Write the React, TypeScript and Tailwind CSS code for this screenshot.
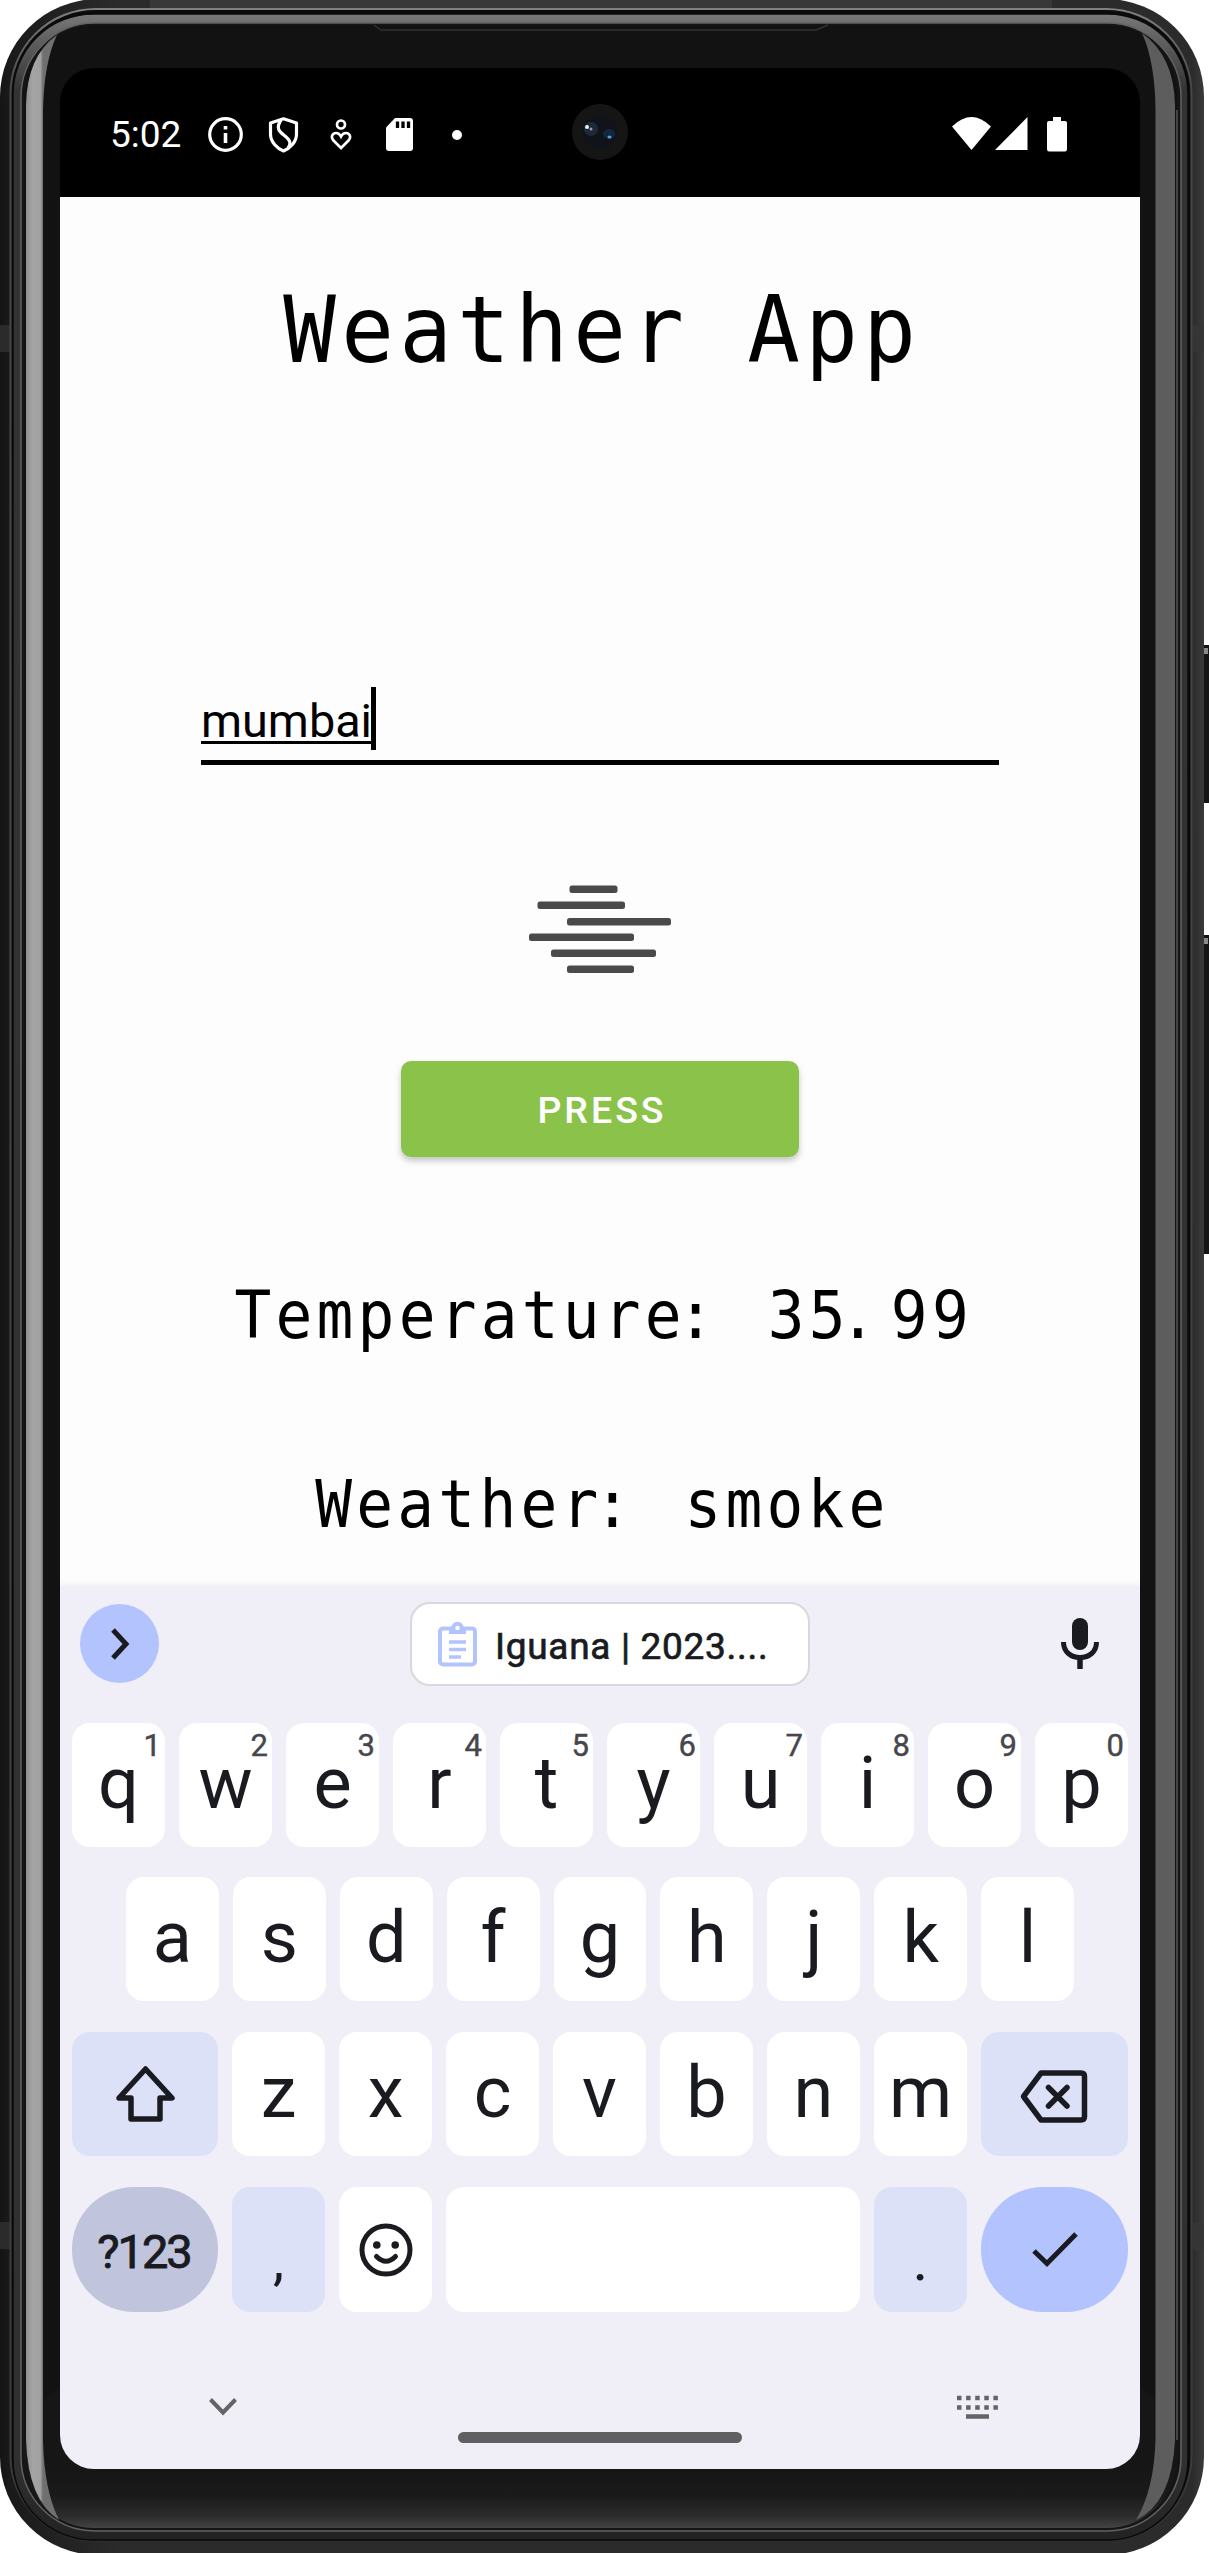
import React from "react";

const INK = "#1a1b21";

function PhoneBody() {
  return (
    <svg className="absolute inset-0" width="1209" height="2553" viewBox="0 0 1209 2553" aria-hidden="true">
      <defs>
        <linearGradient id="shell" x1="0" x2="1" y1="0" y2="0">
          <stop offset="0" stopColor="#141414" />
          <stop offset="0.008" stopColor="#1a1a1a" />
          <stop offset="0.1" stopColor="#2b2b2b" />
          <stop offset="0.99" stopColor="#2b2b2b" />
          <stop offset="1" stopColor="#3a3a3a" />
        </linearGradient>
        <linearGradient id="rim" x1="0" x2="0" y1="0" y2="1">
          <stop offset="0" stopColor="#808080" />
          <stop offset="0.03" stopColor="#484848" />
          <stop offset="0.97" stopColor="#3c3c3c" />
          <stop offset="1" stopColor="#2c2c2c" />
        </linearGradient>
        <linearGradient id="band" x1="0" x2="0" y1="0" y2="1">
          <stop offset="0" stopColor="#787878" />
          <stop offset="0.03" stopColor="#333333" />
          <stop offset="0.97" stopColor="#303030" />
          <stop offset="1" stopColor="#222222" />
        </linearGradient>
        <linearGradient id="face" x1="0" x2="0" y1="2469" y2="2528" gradientUnits="userSpaceOnUse">
          <stop offset="0" stopColor="#161616" />
          <stop offset="0.45" stopColor="#1a1a1a" />
          <stop offset="0.8" stopColor="#2c2c2c" />
          <stop offset="1" stopColor="#434343" />
        </linearGradient>
        <linearGradient id="leftGlass" x1="26" x2="43" y1="0" y2="0" gradientUnits="userSpaceOnUse">
          <stop offset="0" stopColor="#8f8f8f" />
          <stop offset="0.4" stopColor="#a5a5a5" />
          <stop offset="0.85" stopColor="#a0a0a0" />
          <stop offset="1" stopColor="#707070" />
        </linearGradient>
      </defs>

      <rect x="1198" y="645" width="14" height="158" rx="2" fill="#151515" />
      <rect x="1202" y="648" width="6" height="6" fill="#8a8a8a" />
      <rect x="1198" y="935" width="14" height="319" rx="2" fill="#151515" />
      <rect x="1202" y="938" width="6" height="6" fill="#8a8a8a" />

      <rect x="0" y="-1" width="1204" height="2556" rx="98" fill="url(#shell)" />
      <rect x="150" y="0" width="902" height="8" fill="#383838" />
      <rect x="0" y="325" width="11" height="27" fill="#2b2b2b" />
      <rect x="0" y="2222" width="10" height="27" fill="#2b2b2b" />
      <rect x="1193" y="325" width="11" height="27" fill="#353535" />
      <rect x="1193" y="2223" width="11" height="27" fill="#353535" />
      <rect x="10.5" y="9" width="1181" height="2532" rx="85" fill="#0c0c0c" stroke="url(#rim)" strokeWidth="2" />
      <rect x="13" y="14" width="1175" height="2526" rx="80" fill="url(#band)" stroke="#0a0a0a" strokeWidth="1.5" />
      <rect x="21" y="23" width="1160" height="2508" rx="74" fill="#151515" stroke="#626262" strokeWidth="1.5" />
      <rect x="24" y="25" width="1153" height="2503" rx="72" fill="#121212" />
      <rect x="24" y="2380" width="1153" height="148" rx="70" fill="url(#face)" />
      <path d="M374 25 L381 30 H816 L828 25" fill="none" stroke="#303030" strokeWidth="1.5" />
      <path d="M26 105 Q27 56 57 35 Q44 62 43 110 V2440 Q44 2490 59 2520 Q28 2500 26 2440 Z" fill="url(#leftGlass)" />
      <path d="M1175 105 Q1174 56 1142 33 Q1155 62 1155.500 110 V2440 Q1154 2490 1136 2520 Q1172 2503 1175 2440 Z" fill="#5d5d5d" />
      <path d="M1177 110 V2440" stroke="#444" strokeWidth="2" />
    </svg>
  );
}

function StatusBar() {
  return (
    <div className="relative flex h-[129px] shrink-0 items-center bg-black pt-[4px] pl-[50px] pr-[73px] text-white">
      <span className="w-[73px] text-[37px] leading-[40px]">5:02</span>
      <svg className="ml-[24px]" width="37" height="37" viewBox="0 0 37 37" fill="none" stroke="#fff" strokeWidth="3.200">
        <circle cx="18.500" cy="18.500" r="15.800" />
        <path d="M18.500 17 V27 M18.500 10 V13.500" strokeWidth="3.600" />
      </svg>
      <svg className="ml-[24px]" width="31" height="36" viewBox="0 0 31 36" fill="none" stroke="#fff" strokeWidth="3.200" strokeLinejoin="round">
        <path d="M15.500 1.800 L28.500 6 V17 C28.500 25 22 31.500 15.500 34 C9 31.500 2.500 25 2.500 17 V6 Z" />
        <path d="M13 3 C7 12 12 15 17 19 C23 24 23 27 20 31" />
      </svg>
      <svg className="ml-[31px]" width="22" height="31" viewBox="0 0 22 31" fill="none" stroke="#fff" strokeWidth="2.700">
        <circle cx="11" cy="5.500" r="4" />
        <path d="M11 29 L3.500 21.500 C0 17.500 3 14 6 14 C8.500 14 10 15.500 11 17.500 C12 15.500 13.500 14 16 14 C19 14 22 17.500 18.500 21.500 Z" />
      </svg>
      <svg className="ml-[34px]" width="27" height="33" viewBox="0 0 27 33">
        <path d="M9 0 H24 Q27 0 27 3 V30 Q27 33 24 33 H3 Q0 33 0 30 V9.500 Z" fill="#fff" />
        <path d="M11.500 3.500 V10 M17 3.500 V10 M22.500 3.500 V10" stroke="#000" strokeWidth="3.300" />
      </svg>
      <span className="ml-[39px] size-[10px] rounded-full bg-white" />
      <div className="absolute left-[512px] top-[36px] size-[56px] rounded-full bg-[#151515]">
        <svg width="56" height="56" viewBox="0 0 56 56">
          <circle cx="28" cy="28" r="17" fill="#10131a" />
          <circle cx="19" cy="25" r="7" fill="#26394a" opacity="0.6" />
          <circle cx="15" cy="23" r="2" fill="#e6f6f0" />
          <circle cx="19" cy="25" r="1.500" fill="#b08bc8" />
          <ellipse cx="37" cy="30" rx="6" ry="5" fill="#16304a" opacity="0.7" />
          <ellipse cx="37.500" cy="33" rx="2" ry="1.600" fill="#4ba3e6" />
        </svg>
      </div>
      <svg className="ml-auto" width="115" height="35" viewBox="0 0 115 35" fill="#fff">
        <path d="M0 9.500 Q19.500 -9.500 39 9.500 L19.500 33 Z" />
        <path d="M75.500 0 V33 H43 Z" />
        <path d="M101 0 H109 V4 H113 Q115 4 115 6 V32 Q115 34.500 113 34.500 H97 Q95 34.500 95 32 V6 Q95 4 97 4 H101 Z" />
      </svg>
    </div>
  );
}

function WeatherScreen() {
  return (
    <main className="flex h-[1389px] shrink-0 flex-col items-center bg-[#fdfdfd] pt-[78px] text-black">
      <h1 className="ml-[5px] scale-x-[0.94] whitespace-pre font-['DejaVu_Sans_Mono',monospace] text-[93px] leading-[110px] tracking-[5.700px]">Weather App</h1>
      <div className="mt-[302px] flex h-[78px] w-[798px] border-b-[5px] border-black">
        <span className="h-[56px] w-[170px] text-[46.800px] leading-[68px] underline decoration-[3px] underline-offset-[4px] [text-decoration-skip-ink:none]">mumbai</span>
        <span className="h-[63px] w-[5px] bg-black" />
      </div>
      <svg className="mt-[120px]" width="142" height="88" viewBox="0 0 142 88" fill="#4a4a4a">
        <rect x="40.500" y="0.500" width="48" height="7.500" rx="2.500" />
        <rect x="8.500" y="16.500" width="87.500" height="7.500" rx="2.500" />
        <rect x="38" y="33" width="104" height="7.500" rx="2.500" />
        <rect x="0" y="48.500" width="105" height="7.500" rx="2.500" />
        <rect x="22" y="64.500" width="105" height="7.500" rx="2.500" />
        <rect x="38" y="80.500" width="67" height="7.500" rx="2.500" />
      </svg>
      <button className="mt-[88px] h-[96px] w-[398px] rounded-[10px] bg-[#8bc34a] pl-[4px] pt-[2px] text-[37.500px] font-medium tracking-[3px] text-white shadow-[0_4px_6px_rgba(0,0,0,0.22)]">PRESS</button>
      <p className="ml-[8px] mt-[119px] scale-x-[0.94] whitespace-pre font-['DejaVu_Sans_Mono',monospace] text-[65px] leading-[80px] tracking-[4.500px]">
        Temperatur<span className="tracking-[-4.500px]">e</span><span className="tracking-[13.500px]">:</span> 3<span className="tracking-[-6.500px]">5</span><span className="tracking-[15.500px]">.</span>99
      </p>
      <p className="ml-[4px] mt-[109px] scale-x-[0.94] whitespace-pre font-['DejaVu_Sans_Mono',monospace] text-[65px] leading-[80px] tracking-[4.500px]">
        Weathe<span className="tracking-[-4.500px]">r</span><span className="tracking-[13.500px]">:</span> smoke
      </p>
    </main>
  );
}

function Key({ label, hint }: { label: string; hint?: string }) {
  return (
    <div className="relative h-[124px] flex-1 rounded-[18px] bg-white text-center text-[72px] leading-[121px]">
      {label}
      {hint && <span className="absolute right-[4px] top-[7px] text-[31px] leading-[32px] text-[#46464c] [-webkit-text-stroke:0.4px_#46464c]">{hint}</span>}
    </div>
  );
}

function Keyboard() {
  return (
    <section className="flex flex-1 flex-col bg-[#f0eff7] px-[12px] pt-[16px] text-[#1a1b21] shadow-[0_-2px_5px_rgba(0,0,0,0.06)]">
      <div className="flex h-[84px] items-center pl-[8px] pr-[29px]">
        <div className="mb-[1px] flex size-[79px] items-center justify-center rounded-full bg-[#b2c3fe]">
          <svg className="ml-[1px]" width="21" height="32" viewBox="0 0 21 32" fill="none" stroke={INK} strokeWidth="5">
            <path d="M3 2 L16 16 L3 30" />
          </svg>
        </div>
        <div className="ml-[251px] flex h-[84px] w-[400px] items-center rounded-[20px] border-[2.500px] border-[#d8d8de] bg-white pl-[26px]">
          <svg width="39" height="46" viewBox="0 0 39 46" fill="none" stroke="#b2c3fe">
            <rect x="2" y="7.500" width="35" height="36" rx="3" strokeWidth="4" />
            <path d="M11 6 H28 V13 H11 Z" fill="#b2c3fe" stroke="none" />
            <circle cx="19.500" cy="7" r="4.200" strokeWidth="4" fill="#fff" />
            <path d="M11 21 H28 M11 28.500 H28 M11 36 H23" strokeWidth="3.700" />
          </svg>
          <span className="ml-[18px] whitespace-pre pt-[5px] text-[37px] leading-[44px] tracking-[0.700px] [-webkit-text-stroke:0.7px_#1a1b21]">Iguana | 2023....</span>
        </div>
        <svg className="mb-[1px] ml-auto" width="38" height="51" viewBox="0 0 38 51" fill="none" stroke={INK}>
          <rect x="11" y="0" width="16" height="32" rx="8" fill={INK} stroke="none" />
          <path d="M2.500 24 C2.500 34 10 39.500 19 39.500 C28 39.500 35.500 34 35.500 24" strokeWidth="5" />
          <path d="M19 40 V51" strokeWidth="5.500" />
        </svg>
      </div>

      <div className="mt-[37px] flex gap-[14px]">
        {"qwertyuiop".split("").map((k, i) => (
          <Key key={k} label={k} hint={"1234567890"[i]} />
        ))}
      </div>
      <div className="mt-[30px] flex gap-[14px] px-[54px]">
        {"asdfghjkl".split("").map((k) => (
          <Key key={k} label={k} />
        ))}
      </div>
      <div className="mt-[31px] flex gap-[14px]">
        <div className="flex h-[124px] w-[146px] items-center justify-center rounded-[18px] bg-[#dde1f8]">
          <svg width="61" height="58" viewBox="0 0 61 58" fill="none" stroke={INK} strokeWidth="5.500" strokeLinejoin="round">
            <path d="M30.500 4 L57 33 H45 V54 H16 V33 H4 Z" />
          </svg>
        </div>
        {"zxcvbnm".split("").map((k) => (
          <Key key={k} label={k} />
        ))}
        <div className="flex h-[124px] w-[147px] items-center justify-center rounded-[18px] bg-[#dde1f8]">
          <svg className="mr-[2px] mt-[5px]" width="68" height="53" viewBox="0 0 68 53" fill="none" stroke={INK} strokeWidth="5.500">
            <path d="M21 3 H61 Q64.500 3 64.500 6.500 V46.500 Q64.500 50 61 50 H21 L3.500 26.500 Z" strokeLinejoin="round" />
            <path d="M28.500 17.500 L47 36 M47 17.500 L28.500 36" strokeLinecap="round" />
          </svg>
        </div>
      </div>
      <div className="mt-[31px] flex gap-[14px]">
        <div className="h-[125px] w-[146px] rounded-[62px] bg-[#c0c5dd] pr-[2px] text-center text-[47px] leading-[129px] tracking-[-2px] [-webkit-text-stroke:0.9px_#1a1b21]">?123</div>
        <div className="h-[125px] w-[93px] rounded-[18px] bg-[#dde1f8] text-center text-[56px] leading-[146px]">,</div>
        <div className="flex h-[125px] w-[93px] items-center justify-center rounded-[18px] bg-white">
          <svg width="54" height="54" viewBox="0 0 54 54" fill="none" stroke={INK} strokeWidth="5">
            <circle cx="27" cy="27" r="24" />
            <circle cx="17.800" cy="22" r="3.800" fill={INK} stroke="none" />
            <circle cx="36.200" cy="22" r="3.800" fill={INK} stroke="none" />
            <path d="M17.500 33.500 Q27 43 36.500 33.500" strokeLinecap="round" />
          </svg>
        </div>
        <div className="h-[125px] flex-1 rounded-[18px] bg-white" />
        <div className="h-[125px] w-[93px] rounded-[18px] bg-[#dde1f8] text-center text-[60px] leading-[145px]">.</div>
        <div className="flex h-[125px] w-[147px] items-center justify-center rounded-[62px] bg-[#b2c3fe]">
          <svg width="46" height="36" viewBox="0 0 46 36" fill="none" stroke={INK} strokeWidth="5">
            <path d="M2 19 L15 31.500 L44 2" />
          </svg>
        </div>
      </div>

      <div className="mt-[83px] flex items-center pl-[137px] pr-[130px]">
        <svg width="28" height="18" viewBox="0 0 28 18" fill="none" stroke="#646466" strokeWidth="4">
          <path d="M1.500 1.500 L14 14.500 L26.500 1.500" />
        </svg>
        <svg className="ml-auto" width="41" height="24" viewBox="0 0 41 24" stroke="#646466">
          <path d="M0 3 H41 M0 12.500 H41" strokeWidth="4.500" strokeDasharray="4.500 4.600" />
          <path d="M9 21.500 H32" strokeWidth="4.500" />
        </svg>
      </div>
      <div className="mt-[13px] h-[11px] w-[284px] self-center rounded-full bg-[#606062]" />
    </section>
  );
}

export default function App() {
  return (
    <div className="relative h-[2553px] w-[1209px] overflow-hidden bg-white pl-[60px] pt-[68px] font-[Roboto,sans-serif]">
      <PhoneBody />
      <div className="relative flex h-[2401px] w-[1080px] flex-col overflow-hidden rounded-[34px]">
        <StatusBar />
        <WeatherScreen />
        <Keyboard />
      </div>
    </div>
  );
}
